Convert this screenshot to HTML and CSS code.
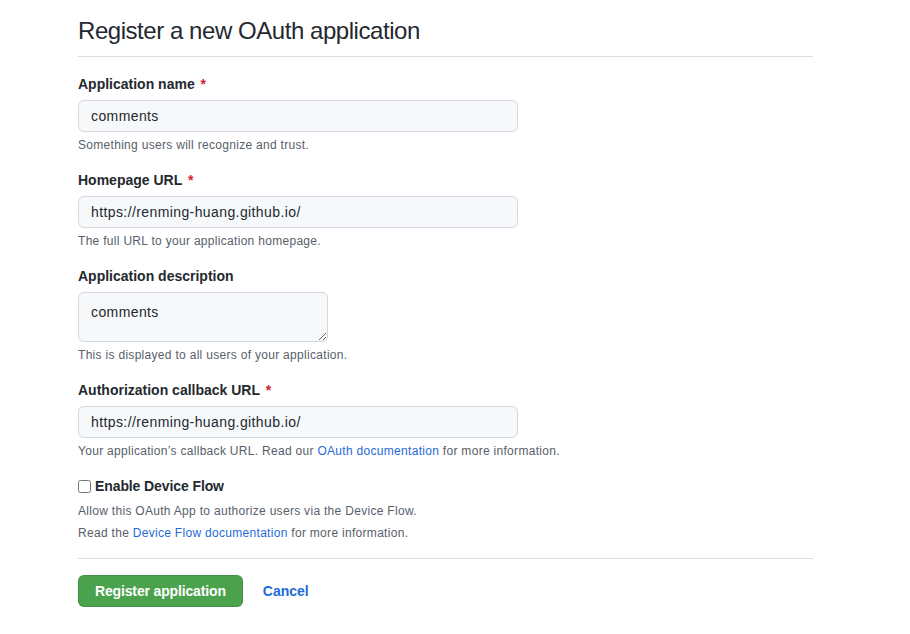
FILE: index.html
```html
<!DOCTYPE html>
<html lang="en">
<head>
<meta charset="utf-8">
<title>Register a new OAuth application</title>
<link rel="stylesheet" href="styles.css">
</head>
<body>
<main class="page">
  <h1 class="subhead">Register a new OAuth application</h1>
  <form class="form">
    <div class="group">
      <label class="label" for="name">Application name <span class="req">*</span></label>
      <input class="input" id="name" type="text" value="comments">
      <p class="note">Something users will recognize and trust.</p>
    </div>
    <div class="group">
      <label class="label" for="url">Homepage URL <span class="req">*</span></label>
      <input class="input" id="url" type="text" value="https://renming-huang.github.io/">
      <p class="note">The full URL to your application homepage.</p>
    </div>
    <div class="group">
      <label class="label" for="desc">Application description</label>
      <textarea class="input textarea" id="desc">comments</textarea>
      <p class="note">This is displayed to all users of your application.</p>
    </div>
    <div class="group">
      <label class="label" for="cb">Authorization callback URL <span class="req">*</span></label>
      <input class="input" id="cb" type="text" value="https://renming-huang.github.io/">
      <p class="note">Your application’s callback URL. Read our <a href="#" class="link">OAuth documentation</a> for more information.</p>
    </div>
    <div class="group check-group">
      <label class="check-label"><input type="checkbox" class="checkbox">Enable Device Flow</label>
      <p class="note note-tight">Allow this OAuth App to authorize users via the Device Flow.</p>
      <p class="note note-tight2">Read the <a href="#" class="link">Device Flow documentation</a> for more information.</p>
    </div>
    <div class="actions">
      <button type="button" class="btn-primary">Register application</button>
      <a href="#" class="btn-cancel">Cancel</a>
    </div>
  </form>
</main>
</body>
</html>
```
FILE: styles.css
```css
html, body {
  margin: 0;
  padding: 0;
  background: #ffffff;
}
body {
  font-family: "Liberation Sans", Arial, sans-serif;
  color: #24292f;
  font-size: 14px;
}
.page {
  width: 735px;
  margin-left: 78px;
  padding-top: 13px;
}
.subhead {
  margin: 0;
  font-size: 24px;
  line-height: 36px;
  font-weight: 400;
  letter-spacing: -0.45px;
  padding-bottom: 7px;
  border-bottom: 1px solid #d8dee4;
}
.form {
  display: flex;
  flex-direction: column;
  padding-top: 17px;
}
.group {
  display: flex;
  flex-direction: column;
  align-items: flex-start;
  margin-bottom: 16px;
}
.label {
  font-weight: 700;
  font-size: 14px;
  line-height: 20px;
  margin-bottom: 6px;
}
.req {
  color: #cf222e;
  margin-left: 2px;
}
.input {
  box-sizing: border-box;
  width: 440px;
  height: 32px;
  margin: 0;
  padding: 5px 12px;
  font-family: inherit;
  font-size: 14px;
  line-height: 20px;
  letter-spacing: 0.4px;
  color: #24292f;
  background: #f6f8fa;
  border: 1px solid #d0d7de;
  border-radius: 6px;
  outline: none;
}
.textarea {
  width: 250px;
  height: 50px;
  padding: 9px 12px;
  resize: vertical;
}
.note {
  margin: 4px 0 0;
  font-size: 12px;
  line-height: 18px;
  letter-spacing: 0.3px;
  color: #57606a;
}
.link {
  color: #1f6bd9;
  text-decoration: none;
}
.check-group {
  margin-bottom: 0;
}
.check-label {
  display: flex;
  align-items: center;
  font-weight: 700;
  font-size: 14px;
  line-height: 20px;
  letter-spacing: -0.1px;
}
.checkbox {
  width: 13px;
  height: 13px;
  margin: 0 4px 0 0;
}
.note-tight {
  margin-top: 6px;
}
.note-tight2 {
  margin-top: 4px;
}
.actions {
  display: flex;
  align-items: center;
  gap: 20px;
  margin-top: 16px;
  padding-top: 16px;
  border-top: 1px solid #d8dee4;
}
.btn-primary {
  box-sizing: border-box;
  height: 32px;
  padding: 0 16px;
  font-family: inherit;
  font-size: 14px;
  font-weight: 700;
  letter-spacing: -0.15px;
  color: #ffffff;
  background: #4aa24d;
  border: 1px solid rgba(27, 31, 36, 0.15);
  border-radius: 6px;
}
.btn-cancel {
  font-size: 14px;
  font-weight: 700;
  color: #1f6bd9;
  text-decoration: none;
}
```
